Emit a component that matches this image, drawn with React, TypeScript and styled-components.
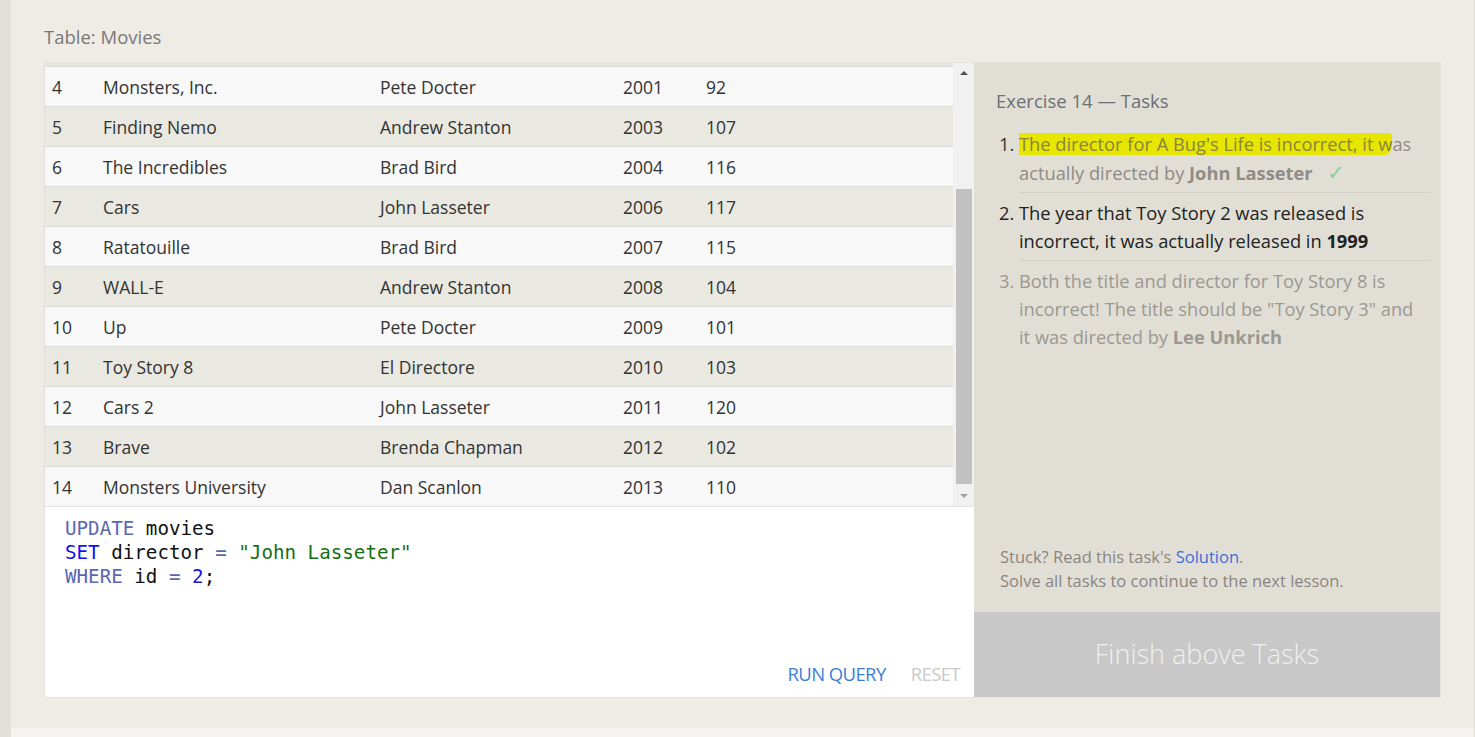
import React from "react";
import styled, { createGlobalStyle } from "styled-components";

const Global = createGlobalStyle`
  html, body { margin: 0; padding: 0; }
  body {
    background: #efece6;
    font-family: "Open Sans", "Noto Sans", sans-serif;
    overflow: hidden;
  }
`;

const Page = styled.div`
  display: flex;
  width: 1475px;
  height: 737px;
`;

const LeftStrip = styled.div`
  width: 11px;
  background: #e3e0dc;
  flex: none;
`;

const Main = styled.div`
  flex: 1;
  display: flex;
  flex-direction: column;
  background: #efece6;
  border-right: 2px solid #e2dfda;
`;

const Content = styled.div`
  flex: 1;
  padding: 24px 33px 0 33px;
`;

const BottomStrip = styled.div`
  height: 9px;
  background: #f4f3ef;
`;

const Title = styled.h2`
  margin: 0 0 12px 0;
  font-size: 18.5px;
  line-height: 26px;
  font-weight: 400;
  color: #787878;
`;

const Card = styled.div`
  display: grid;
  grid-template-columns: 929px 466px;
  border: 1px solid #e6e3dc;
  border-left-color: #e2dfd8;
  width: 1395px;
`;

const LeftCol = styled.div`
  display: flex;
  flex-direction: column;
  background: #fff;
`;

const TableWrap = styled.div`
  display: flex;
  height: 443px;
  background: #e8e6df;
`;

const TableArea = styled.div`
  flex: 1;
  padding-top: 3px;
`;

const Row = styled.div<{ $alt: boolean }>`
  display: grid;
  grid-template-columns: 51px 277px 243px 83px 1fr;
  height: 39px;
  align-items: center;
  border-top: 1px solid #dcdcda;
  background: ${(p) => (p.$alt ? "#e9e8e1" : "#f8f8f8")};
  font-size: 17.5px;
  color: #333;
  padding-left: 7px;
`;

const Cell = styled.span`
  white-space: nowrap;
`;

const Scrollbar = styled.div`
  width: 21px;
  background: #f1f1f1;
  display: flex;
  flex-direction: column;
  align-items: center;
`;

const Arrow = styled.div<{ $down?: boolean }>`
  width: 0;
  height: 0;
  border-left: 4px solid transparent;
  border-right: 4px solid transparent;
  ${(p) =>
    p.$down
      ? "border-top: 4px solid #a3a3a3; margin-top: 8px;"
      : "border-bottom: 4px solid #505050; margin-top: 8px;"}
`;

const Track = styled.div`
  flex: 1;
  width: 16px;
  margin-top: 114px;
  display: flex;
  flex-direction: column;
`;

const Thumb = styled.div`
  height: 295px;
  background: #c1c1c1;
`;

const BottomSpacer = styled.div`
  height: 8px;
`;

const Editor = styled.div`
  height: 190px;
  display: flex;
  flex-direction: column;
  border-top: 1px solid #e3e3e3;
  background: #fff;
`;

const Code = styled.pre`
  margin: 0;
  padding: 10px 20px 0 20px;
  font-family: "DejaVu Sans Mono", "Liberation Mono", monospace;
  font-size: 19.2px;
  line-height: 24px;
  color: #111;
  flex: 1;
`;

const Kw = styled.span<{ $c: string }>`
  color: ${(p) => p.$c};
`;

const Buttons = styled.div`
  display: flex;
  justify-content: flex-end;
  gap: 25px;
  padding: 0 14px 10px 0;
`;

const TextButton = styled.button<{ $muted?: boolean }>`
  background: none;
  border: none;
  padding: 0;
  font-family: "Open Sans", sans-serif;
  font-size: 18.5px;
  line-height: 26px;
  letter-spacing: -0.6px;
  color: ${(p) => (p.$muted ? "#c9c9c9" : "#3d7fd6")};
  cursor: pointer;
`;

const RightCol = styled.div`
  display: flex;
  flex-direction: column;
  background: #e1dfd5;
`;

const Tasks = styled.div`
  flex: 1;
  padding: 25px 10px 0 22px;
  display: flex;
  flex-direction: column;
`;

const TasksTitle = styled.h3`
  margin: 0 0 16px 0;
  font-size: 18.5px;
  font-weight: 400;
  line-height: 26px;
  color: #6c6f76;
`;

const List = styled.ol`
  margin: 0;
  padding: 0 0 0 23px;
`;

const Item = styled.li<{ $state: "done" | "current" | "todo" }>`
  font-size: 18.3px;
  line-height: 28px;
  padding: 0 10px 5px 0;
  margin-bottom: 6px;
  border-bottom: 1px solid ${(p) => (p.$state === "todo" ? "transparent" : "#d1cfc5")};
  color: ${(p) =>
    p.$state === "done" ? "#8f8b86" : p.$state === "current" ? "#222" : "#9b9893"};
  &::marker {
    color: ${(p) =>
      p.$state === "done" ? "#333" : p.$state === "current" ? "#222" : "#9b9893"};
  }
`;

const Highlight = styled.mark`
  background: linear-gradient(to bottom, transparent 8%, #e6e600 8%, #e6e600 96%, transparent 96%);
  color: #8a8540;
  border-radius: 2px 6px 10px 2px;
`;

const Check = styled.span`
  color: #8bcf98;
  margin-left: 14px;
  font-size: 21px;
`;

const Footer = styled.div`
  margin-top: auto;
  padding: 0 0 19px 4px;
  font-size: 16.5px;
  line-height: 24px;
  color: #8a8580;
`;

const Link = styled.a`
  color: #3b6fd9;
  text-decoration: none;
`;

const Finish = styled.button`
  height: 85px;
  border: none;
  background: #c8c8c8;
  color: #efefef;
  font-family: "Open Sans", sans-serif;
  font-weight: 300;
  font-size: 27px;
  padding: 0 0 2px 0;
`;

const rows = [
  [4, "Monsters, Inc.", "Pete Docter", 2001, 92],
  [5, "Finding Nemo", "Andrew Stanton", 2003, 107],
  [6, "The Incredibles", "Brad Bird", 2004, 116],
  [7, "Cars", "John Lasseter", 2006, 117],
  [8, "Ratatouille", "Brad Bird", 2007, 115],
  [9, "WALL-E", "Andrew Stanton", 2008, 104],
  [10, "Up", "Pete Docter", 2009, 101],
  [11, "Toy Story 8", "El Directore", 2010, 103],
  [12, "Cars 2", "John Lasseter", 2011, 120],
  [13, "Brave", "Brenda Chapman", 2012, 102],
  [14, "Monsters University", "Dan Scanlon", 2013, 110],
];

export default function App() {
  return (
    <>
      <Global />
      <Page>
        <LeftStrip />
        <Main>
          <Content>
            <Title>Table: Movies</Title>
            <Card>
              <LeftCol>
                <TableWrap>
                  <TableArea>
                    {rows.map((r, i) => (
                      <Row key={r[0]} $alt={i % 2 === 1}>
                        {r.map((c, j) => (
                          <Cell key={j}>{c}</Cell>
                        ))}
                      </Row>
                    ))}
                  </TableArea>
                  <Scrollbar>
                    <Arrow />
                    <Track>
                      <Thumb />
                    </Track>
                    <Arrow $down />
                    <BottomSpacer />
                  </Scrollbar>
                </TableWrap>
                <Editor>
                  <Code>
                    <Kw $c="#5a67b0">UPDATE</Kw> movies{"\n"}
                    <Kw $c="#1010f0">SET</Kw> director <Kw $c="#5a67b0">=</Kw>{" "}
                    <Kw $c="#157015">"John Lasseter"</Kw>
                    {"\n"}
                    <Kw $c="#5a67b0">WHERE</Kw> id <Kw $c="#5a67b0">=</Kw>{" "}
                    <Kw $c="#1a1acc">2</Kw>;
                  </Code>
                  <Buttons>
                    <TextButton>RUN QUERY</TextButton>
                    <TextButton $muted>RESET</TextButton>
                  </Buttons>
                </Editor>
              </LeftCol>
              <RightCol>
                <Tasks>
                  <TasksTitle>Exercise 14 — Tasks</TasksTitle>
                  <List>
                    <Item $state="done">
                      <Highlight>The director for A Bug's Life is incorrect, it w</Highlight>as
                      actually directed by <b>John Lasseter</b>
                      <Check>✓</Check>
                    </Item>
                    <Item $state="current">
                      The year that Toy Story 2 was released is incorrect, it was actually
                      released in <b>1999</b>
                    </Item>
                    <Item $state="todo">
                      Both the title and director for Toy Story 8 is incorrect! The title
                      should be "Toy Story 3" and it was directed by <b>Lee Unkrich</b>
                    </Item>
                  </List>
                  <Footer>
                    Stuck? Read this task's <Link href="#">Solution</Link>.
                    <br />
                    Solve all tasks to continue to the next lesson.
                  </Footer>
                </Tasks>
                <Finish>Finish above Tasks</Finish>
              </RightCol>
            </Card>
          </Content>
          <BottomStrip />
        </Main>
      </Page>
    </>
  );
}
